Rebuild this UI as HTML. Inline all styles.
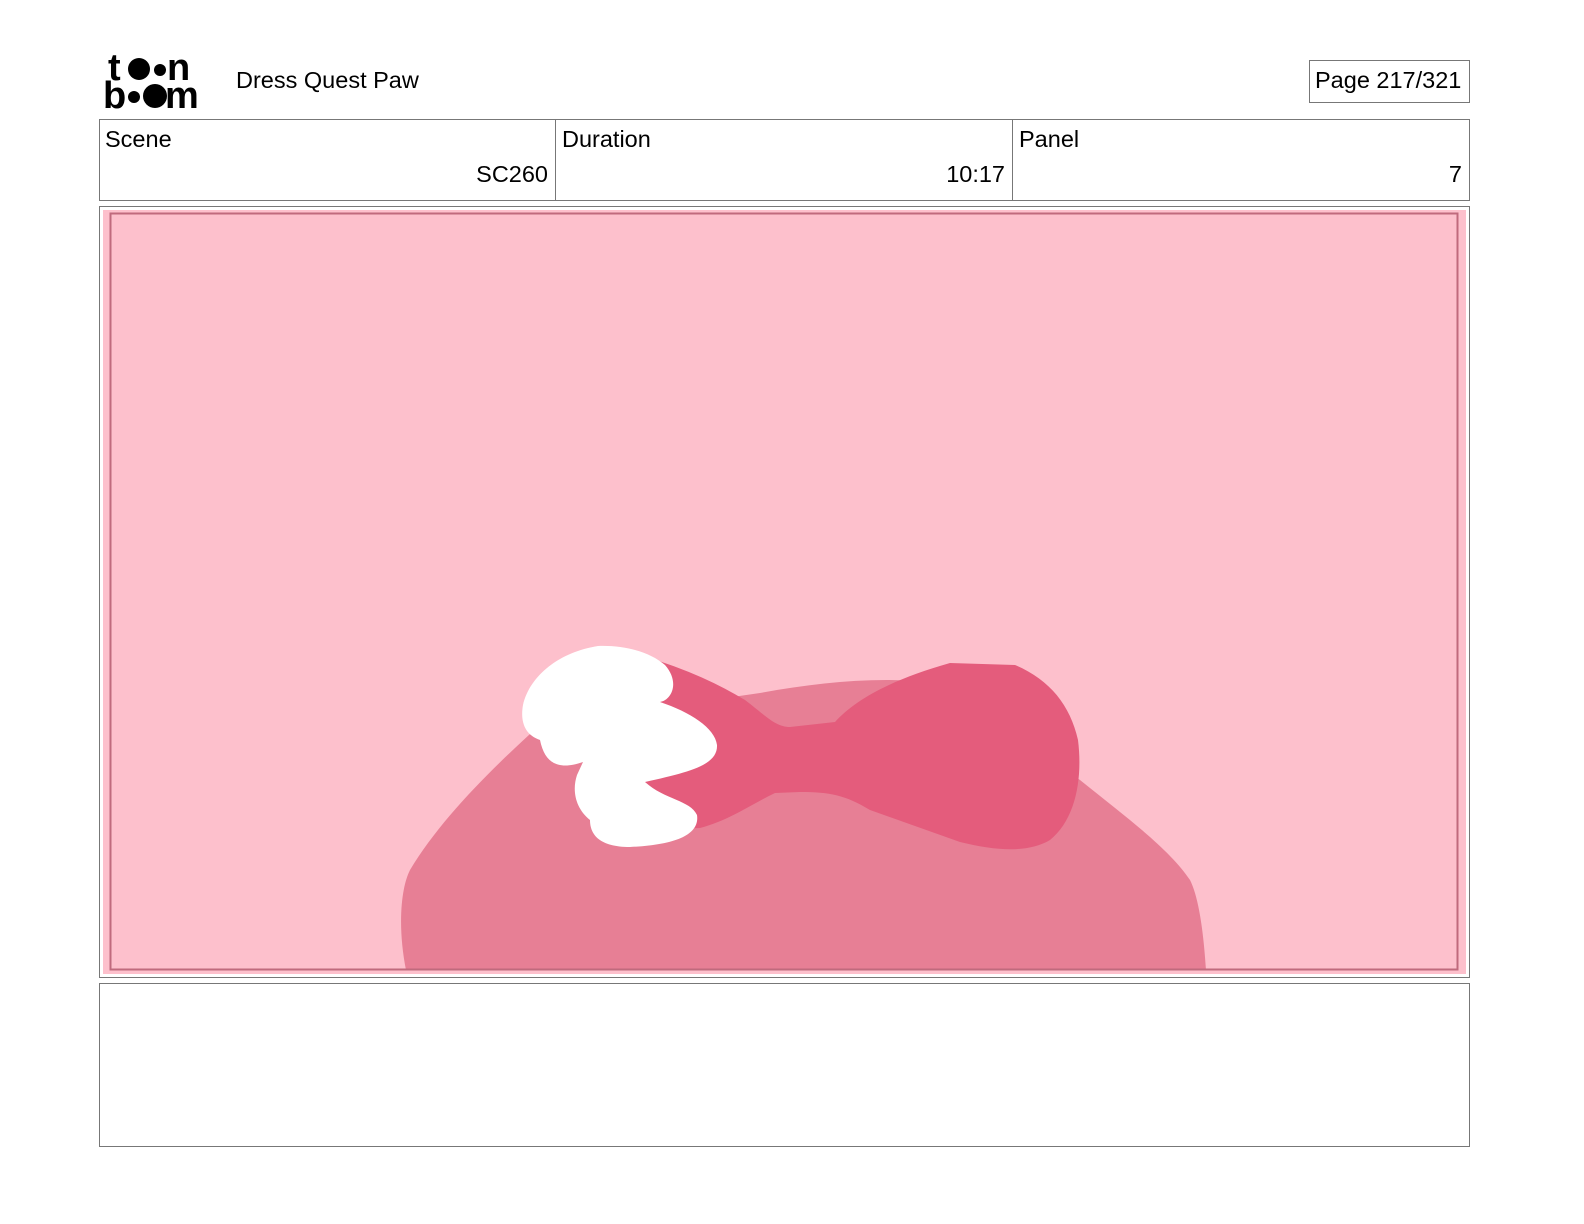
<!DOCTYPE html>
<html><head><meta charset="utf-8"><style>
body{margin:0;background:#fff;width:1584px;height:1224px;position:relative;font-family:"Liberation Sans",sans-serif;color:#000}
.a{position:absolute}
.box{position:absolute;border:1px solid #777;box-sizing:border-box}
.t{font-size:23.5px}
</style></head><body>
<svg class="a" style="left:103px;top:50px" width="112" height="62" viewBox="0 0 112 62">
<text x="5" y="30" font-family="Liberation Sans" font-weight="bold" font-size="38">t</text>
<circle cx="36" cy="19" r="11"/><circle cx="57" cy="20" r="6"/>
<text x="64" y="30" font-family="Liberation Sans" font-weight="bold" font-size="38">n</text>
<text x="0" y="58" font-family="Liberation Sans" font-weight="bold" font-size="38">b</text>
<circle cx="31" cy="47" r="6"/><circle cx="52" cy="46" r="12"/>
<text x="62" y="58" font-family="Liberation Sans" font-weight="bold" font-size="38">m</text>
</svg>
<div class="a t" style="left:236px;top:67px">Dress Quest Paw</div>
<div class="box" style="left:1309px;top:60px;width:161px;height:43px"></div>
<div class="a t" style="left:1315px;top:67px">Page 217/321</div>
<div class="box" style="left:99px;top:119px;width:1371px;height:82px"></div>
<div class="a" style="left:555px;top:119px;width:1px;height:82px;background:#777"></div>
<div class="a" style="left:1012px;top:119px;width:1px;height:82px;background:#777"></div>
<div class="a t" style="left:105px;top:126px">Scene</div>
<div class="a t" style="left:562px;top:126px">Duration</div>
<div class="a t" style="left:1019px;top:126px">Panel</div>
<div class="a t" style="right:1036px;top:161px">SC260</div>
<div class="a t" style="right:579px;top:161px">10:17</div>
<div class="a t" style="right:122px;top:161px">7</div>
<div class="box" style="left:99px;top:206px;width:1371px;height:772px"></div>
<svg class="a" style="left:103px;top:210px" width="1363" height="764" viewBox="103 210 1363 764">
<rect x="103" y="210" width="1363" height="764" fill="#fdc0cc"/>
<path d="M406 970 C398 930 400 890 410 870 C440 820 490 770 540 725 L760 693 C820 682 880 676 940 683 L1080 780 C1130 820 1170 850 1190 880 C1200 900 1204 940 1206 970 Z" fill="#e77f95"/>
<path d="M640 655 C690 670 720 685 745 700 C765 715 775 727 790 727 L835 722 C855 700 890 680 950 663 L1015 665 C1050 680 1070 705 1078 740 C1083 780 1075 820 1050 840 C1030 852 1000 852 960 842 L870 810 C845 795 830 792 800 792 L775 793 C750 805 730 820 700 828 L640 830 Z" fill="#e45c7c"/>
<path d="M598 646 C625 645 650 652 665 665 C680 682 672 700 660 702 C690 712 715 728 717 745 C718 765 690 772 645 782 C665 800 690 800 697 815 C700 835 675 845 630 847 C600 847 590 835 590 820 C575 808 572 790 577 775 L583 762 C560 770 545 765 540 740 C525 735 520 722 523 705 C530 675 560 652 598 646 Z" fill="#fff"/>
<rect x="110.5" y="213.5" width="1347" height="756" fill="none" stroke="#c06a7d" stroke-width="2"/>
</svg>
<div class="box" style="left:99px;top:983px;width:1371px;height:164px"></div>
</body></html>
